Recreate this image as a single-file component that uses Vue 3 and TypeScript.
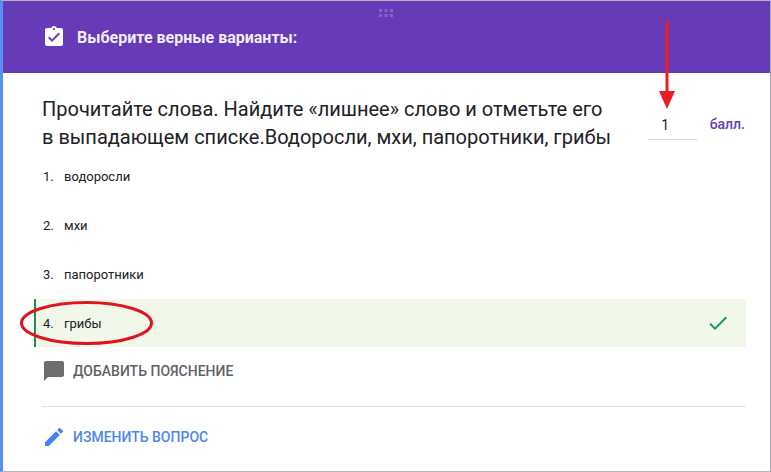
<script setup lang="ts">
const options = [
  { n: 1, label: 'водоросли', correct: false },
  { n: 2, label: 'мхи', correct: false },
  { n: 3, label: 'папоротники', correct: false },
  { n: 4, label: 'грибы', correct: true },
]
</script>

<template>
  <div class="page">
    <div class="card">
      <header class="head">
        <svg class="grip" width="16" height="10" viewBox="0 0 16 10">
          <g fill="#8565c4">
            <rect x="1" y="1" width="3" height="3" /><rect x="6.5" y="1" width="3" height="3" /><rect x="12" y="1" width="3" height="3" />
            <rect x="1" y="6" width="3" height="3" /><rect x="6.5" y="6" width="3" height="3" /><rect x="12" y="6" width="3" height="3" />
          </g>
        </svg>
        <svg class="assign" width="24" height="24" viewBox="0 0 24 24">
          <path fill="#fff" d="M19 3h-4.18C14.4 1.84 13.3 1 12 1s-2.4.84-2.82 2H5c-1.1 0-2 .9-2 2v14c0 1.1.9 2 2 2h14c1.1 0 2-.9 2-2V5c0-1.1-.9-2-2-2zm-7 0c.55 0 1 .45 1 1s-.45 1-1 1-1-.45-1-1 .45-1 1-1zm-2 14-4-4 1.41-1.41L10 14.17l6.59-6.59L18 9l-8 8z" />
        </svg>
        <span class="head-title">Выберите верные варианты:</span>
      </header>

      <div class="body">
        <div class="question">
          <p class="q-text">Прочитайте слова. Найдите «лишнее» слово и отметьте его<br />в выпадающем списке.Водоросли, мхи, папоротники, грибы</p>
          <div class="points">
            <span class="score">1</span>
            <span class="unit">балл.</span>
          </div>
        </div>

        <ul class="options">
          <li v-for="o in options" :key="o.n" class="option" :class="{ correct: o.correct }">
            <span class="num">{{ o.n }}.</span>
            <span class="label">{{ o.label }}</span>
            <svg v-if="o.correct" class="check" width="24" height="24" viewBox="0 0 24 24">
              <path fill="#1e9a5c" d="M9 16.2 4.8 12l-1.4 1.4L9 19 21 7l-1.4-1.4z" />
            </svg>
          </li>
        </ul>

        <div class="action add">
          <svg width="24" height="24" viewBox="0 0 24 24">
            <path fill="#6e6e6e" d="M21.99 4c0-1.1-.89-2-1.99-2H4c-1.1 0-2 .9-2 2v12c0 1.1.9 2 2 2h14l4 4-.01-18z" transform="matrix(-1 0 0 1 24 0)" />
          </svg>
          <span>ДОБАВИТЬ ПОЯСНЕНИЕ</span>
        </div>
        <div class="divider"></div>
        <div class="action edit">
          <svg width="24" height="24" viewBox="0 0 24 24">
            <path fill="#4285f4" d="M3 17.25V21h3.75L17.81 9.94l-3.75-3.75L3 17.25zM20.71 7.04a1 1 0 0 0 0-1.41l-2.34-2.34a1 1 0 0 0-1.41 0l-1.83 1.83 3.75 3.75 1.83-1.83z" />
          </svg>
          <span>ИЗМЕНИТЬ ВОПРОС</span>
        </div>
      </div>
    </div>

    <svg class="marks" width="771" height="472" viewBox="0 0 771 472">
      <line x1="667" y1="20" x2="667" y2="95" stroke="#ed1c24" stroke-width="3" />
      <polygon points="659,91 675,91 667,109" fill="#ed1c24" />
      <ellipse cx="86.5" cy="323" rx="65" ry="20.5" fill="none" stroke="#e0141e" stroke-width="3" />
    </svg>
  </div>
</template>

<style>
html, body { margin: 0; background: #fff; }
</style>

<style scoped>
.page {
  position: relative;
  width: 771px;
  height: 472px;
  overflow: hidden;
  font-family: Roboto, "Liberation Sans", sans-serif;
}
.card {
  box-sizing: border-box;
  width: 771px;
  height: 472px;
  background: #fff;
  border-top: 1px solid #b5b5b5;
  border-right: 1px solid #a8a8b0;
  border-bottom: 1px solid #b5b5b5;
  border-left: 3px solid #5491f5;
  display: flex;
  flex-direction: column;
}
.head {
  position: relative;
  height: 72px;
  flex: none;
  background: #673ab7;
  display: flex;
  align-items: center;
  gap: 11px;
  padding: 0 0 0 39px;
  box-sizing: border-box;
}
.grip { position: absolute; left: 375px; top: 7px; }
.assign { flex: none; }
.head-title {
  color: #f3eefb;
  font-size: 16px;
  font-weight: 700;
}
.body { flex: 1; display: flex; flex-direction: column; padding: 0 24px 0 31px; }
.question {
  display: flex;
  height: 79px;
  flex: none;
  justify-content: space-between;
  padding: 22px 0 0 8px;
  box-sizing: border-box;
}
.q-text {
  margin: 0;
  font-size: 20px;
  line-height: 28px;
  color: #202124;
}
.points { display: flex; align-items: flex-start; margin-right: 1px; }
.score {
  width: 50px;
  height: 30px;
  margin-top: 15px;
  padding-right: 15px;
  box-sizing: border-box;
  border-bottom: 1px solid #e0e0e0;
  text-align: center;
  font-size: 14px;
  line-height: 30px;
  color: #202124;
}
.unit {
  margin: 15px 0 0 12px;
  font-size: 14px;
  font-weight: 500;
  line-height: 28px;
  color: #673ab7;
}
.options { list-style: none; margin: 0; padding: 0; }
.option {
  height: 49px;
  display: flex;
  align-items: center;
  padding-left: 7px;
  box-sizing: border-box;
  font-size: 13px;
  color: #202124;
  border-left: 2px solid transparent;
}
.option.correct {
  height: 48px;
  background: #f1f7e9;
  border-left-color: #1e8e50;
}
.num { width: 21px; }
.check { margin-left: auto; margin-right: 16px; }
.action {
  display: flex;
  align-items: center;
  gap: 7px;
  padding-left: 8px;
  font-size: 14px;
  font-weight: 500;
}
.action.add { height: 47px; color: #5f6368; padding-top: 1px; box-sizing: border-box; }
.action.edit { height: 59px; color: #4f86e8; }
.divider { height: 1px; background: #e0e0e0; margin: 12px 0 0 8px; flex: none; }
.marks { position: absolute; left: 0; top: 0; pointer-events: none; }
</style>
